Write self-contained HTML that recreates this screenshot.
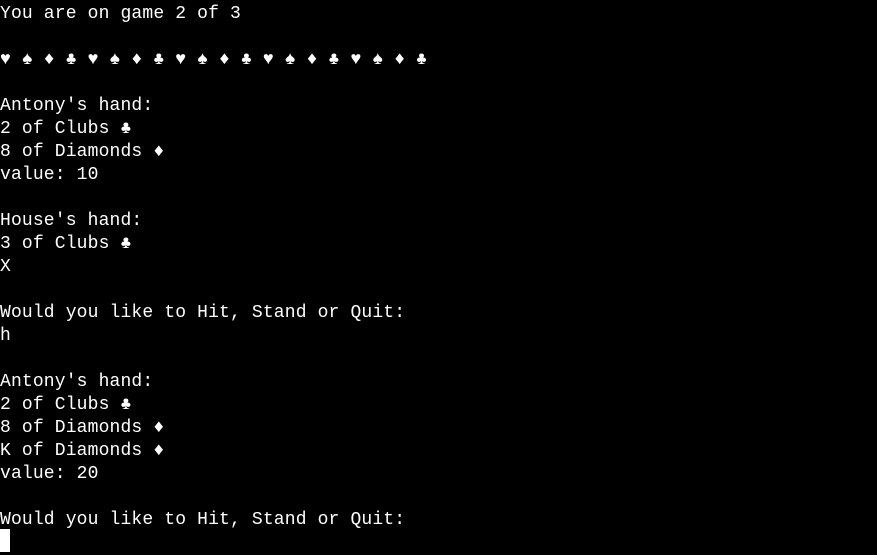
<!DOCTYPE html>
<html><head><meta charset="utf-8"><style>
html,body{margin:0;padding:0;background:#000;width:877px;height:555px;overflow:hidden}
pre{margin:0;padding:3px 0 0 0;color:#fff;font-family:"Liberation Mono","DejaVu Sans Mono",monospace;font-size:18px;line-height:23px;letter-spacing:0.15px;white-space:pre}
.cur{display:inline-block;width:10px;height:23px;background:#fff;vertical-align:top;margin-top:-3px}
</style></head><body><pre>You are on game 2 of 3

♥ ♠ ♦ ♣ ♥ ♠ ♦ ♣ ♥ ♠ ♦ ♣ ♥ ♠ ♦ ♣ ♥ ♠ ♦ ♣

Antony's hand:
2 of Clubs ♣
8 of Diamonds ♦
value: 10

House's hand:
3 of Clubs ♣
X

Would you like to Hit, Stand or Quit:
h

Antony's hand:
2 of Clubs ♣
8 of Diamonds ♦
K of Diamonds ♦
value: 20

Would you like to Hit, Stand or Quit:
<span class="cur"></span></pre></body></html>
